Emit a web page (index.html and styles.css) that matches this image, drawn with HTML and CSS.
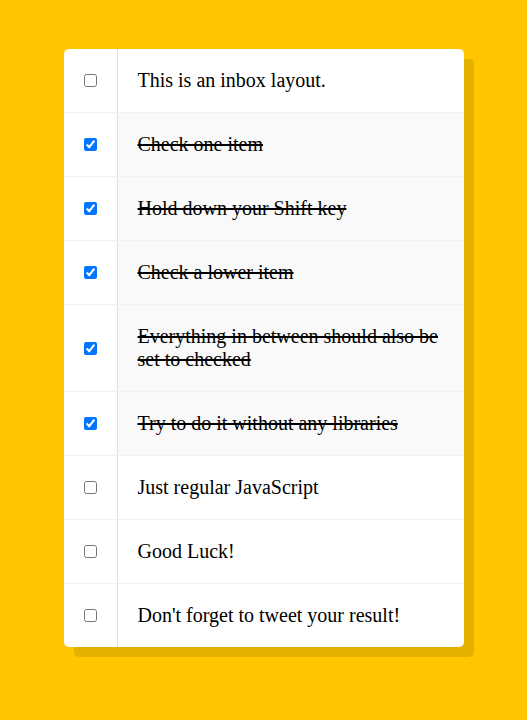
FILE: index.html
```html
<!DOCTYPE html>
<html lang="en">
<head>
<meta charset="UTF-8">
<title>Hold Shift to Check Multiple Checkboxes</title>
<link rel="stylesheet" href="styles.css">
</head>
<body>
<div class="inbox">
  <div class="item">
    <input type="checkbox">
    <p>This is an inbox layout.</p>
  </div>
  <div class="item">
    <input type="checkbox" checked>
    <p>Check one item</p>
  </div>
  <div class="item">
    <input type="checkbox" checked>
    <p>Hold down your Shift key</p>
  </div>
  <div class="item">
    <input type="checkbox" checked>
    <p>Check a lower item</p>
  </div>
  <div class="item">
    <input type="checkbox" checked>
    <p>Everything in between should also be set to checked</p>
  </div>
  <div class="item">
    <input type="checkbox" checked>
    <p>Try to do it without any libraries</p>
  </div>
  <div class="item">
    <input type="checkbox">
    <p>Just regular JavaScript</p>
  </div>
  <div class="item">
    <input type="checkbox">
    <p>Good Luck!</p>
  </div>
  <div class="item">
    <input type="checkbox">
    <p>Don't forget to tweet your result!</p>
  </div>
</div>
</body>
</html>
```

FILE: styles.css
```css
html {
  font-family: "Liberation Sans", sans-serif;
  background: #ffc600;
}

body {
  margin: 0;
  padding: 49px 0;
}

.inbox {
  max-width: 400px;
  margin: 0 auto;
  background: white;
  border-radius: 5px;
  box-shadow: 10px 10px 0 rgba(0, 0, 0, 0.1);
}

.item {
  display: flex;
  align-items: center;
  border-bottom: 1px solid #f1f1f1;
}

.item:last-child {
  border-bottom: 0;
}

.item input[type="checkbox"] {
  margin: 20px;
}

.item p {
  margin: 0;
  padding: 20px;
  flex: 1;
  font-family: "Liberation Serif", serif;
  font-size: 20px;
  font-weight: 200;
  border-left: 1px solid #d1e2ff;
}

.item input:checked + p {
  background: #f9f9f9;
  text-decoration: line-through;
}
```
